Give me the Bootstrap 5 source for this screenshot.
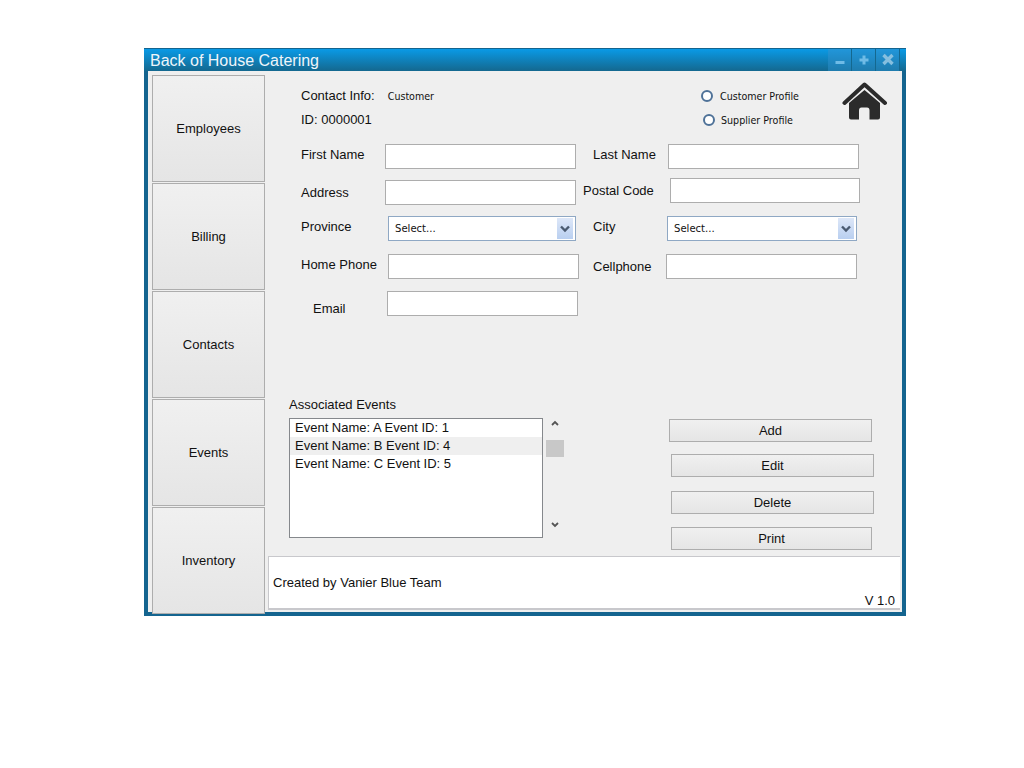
<!DOCTYPE html>
<html lang="en">
<head>
    <meta charset="UTF-8">
    <meta name="viewport" content="width=device-width, initial-scale=1.0">
    <link href="https://cdn.jsdelivr.net/npm/bootstrap@5.3.3/dist/css/bootstrap.min.css" rel="stylesheet">
    <title>Back of House Catering</title>
    <style>
        body { background: #fff; font-family: "Liberation Sans", Arial, sans-serif; font-size: 13px; color: #111; }
        .app-window { width: 762px; height: 568px; margin: 48px 0 0 144px; background: #efefef; border: 4px solid #14648f; border-top-width: 1px; }
        .title-bar { height: 22px; margin: 0 -4px; padding-left: 6px; background: linear-gradient(#0a9ae6, #14688f); color: #eef5fa; font-size: 16px; line-height: 24px; }
        .win-btns { margin-right: 6px; }
        .win-btn { width: 24px; height: 22px; border-right: 1px solid #14688f; background: linear-gradient(#2196da, #1f7cae); }
        .side-col { width: 113px; margin-left: 4px; padding-top: 4px; }
        .side-btn { display: block; width: 113px; height: 107px; margin-bottom: 1px; padding: 0; border: 1px solid #adadad; border-radius: 0; background: linear-gradient(#f0f0f0, #e5e5e5); color: #111; font-size: 13px; }
        .main-col { width: 633px; margin-left: 3px; }
        .form-area { height: 485px; padding-top: 12px; }

        .top-block { height: 50px; }
        .top-info { width: 433px; padding: 1px 0 0 33px; }
        .top-radios { width: 141px; padding-top: 2px; }
        .top-row { height: 24px; }
        .tiny-txt { font-family: "DejaVu Sans Condensed", "DejaVu Sans", sans-serif; font-size: 10.6px; }
        .customer-val { margin: 2px 0 0 13px; }
        .radio-shift { padding-left: 2px; }
        .app-window .profile-radio { width: 12px; height: 12px; margin: -2px 7px 0 0; border: 2px solid #4f7298; background-color: #fff; background-image: none; }
        .app-window .radio-shift .profile-radio { margin-right: 6px; }
        .home-icon { width: 46px; height: 40px; display: block; margin-top: -1px; }

        .field-row { display: flex; align-items: flex-start; padding-left: 33px; }
        .row-first { margin-top: 11px; height: 25px; }
        .row-second { margin-top: 9px; height: 27px; }
        .row-province { margin-top: 11px; height: 25px; }
        .row-phone { margin-top: 13px; height: 25px; }
        .row-email { margin-top: 12px; height: 25px; padding-left: 45px; }
        .fld-group { display: flex; align-items: center; }
        .lbl-84 { width: 84px; }
        .lbl-87 { width: 87px; }
        .lbl-74 { width: 74px; }
        .lbl-75 { width: 75px; }
        .lbl-73 { width: 73px; }
        .lbl-up { position: relative; top: -2px; }
        .lbl-far-down { position: relative; top: 5px; }
        .gap-17 { margin-left: 17px; }
        .gap-7 { margin-left: 7px; }
        .gap-14 { margin-left: 14px; }
        .nudge-2 { margin-top: 2px; }
        .app-window .txt-field { width: 191px; height: 25px; min-height: 0; padding: 0 4px; border: 1px solid #adadad; border-radius: 0; background: #fff; font-size: 13px; }
        .app-window .txt-narrow { width: 190px; }
        .app-window .pick-field { width: 188px; height: 25px; min-height: 0; padding: 2px 0 0 6px; border: 1px solid #8fa8c4; border-radius: 0; font-family: "DejaVu Sans Condensed", "DejaVu Sans", sans-serif; font-size: 11.2px; color: #111;
            background-color: #fff;
            background-image: url("data:image/svg+xml,%3Csvg xmlns='http://www.w3.org/2000/svg' width='16' height='21'%3E%3Cpath d='M4 8.5l4 4 4-4' fill='none' stroke='%234a5a70' stroke-width='2.4'/%3E%3C/svg%3E"), linear-gradient(#dde7f8, #b9cff0);
            background-repeat: no-repeat; background-size: 16px 21px, 16px 21px; background-position: right 2px center, right 2px center; }
        .app-window .pick-wide { width: 190px; }

        .events-block { margin-top: 80px; padding-left: 21px; }
        .events-label { height: 22px; line-height: 18px; }
        .event-list { width: 254px; height: 120px; border: 1px solid #85888c; border-radius: 0; background: #fff; }
        .app-window .event-row { height: 18px; padding: 0 0 0 5px; border: 0; border-radius: 0; background: transparent; line-height: 17px; color: #111; font-size: 13px; }
        .app-window .event-on { background: #efefef; }
        .scroll-col { position: relative; width: 18px; height: 120px; margin: 22px 0 0 3px; }
        .scroll-thumb { position: absolute; left: 0; top: 22px; width: 18px; height: 17px; background: #c8c8c8; }
        .scroll-arrow { position: absolute; left: 5px; width: 8px; height: 6px; display: block; }
        .arrow-up { top: 2px; }
        .arrow-down { top: 104px; }
        .btn-col { margin-left: 105px; padding-top: 23px; }
        .action-btn { display: block; width: 203px; height: 23px; padding: 0; border: 1px solid #adadad; border-radius: 0; background: linear-gradient(#f0f0f0, #e5e5e5); color: #111; font-size: 13px; }
        .edit-btn { margin: 12px 0 0 2px; }
        .delete-btn { margin: 14px 0 0 2px; }
        .print-btn { margin: 13px 0 0 2px; width: 201px; }

        .foot-bar { height: 54px; margin-right: 1px; background: #fff; border: 1px solid #c8c8cc; border-right: 0; border-bottom-width: 2px; padding: 0 5px 0 4px; }
        .foot-made { padding-top: 16px; }
        .foot-ver { padding-top: 34px; }
    </style>
</head>
<body>
    <div class="app-window">
        <div class="title-bar d-flex justify-content-between">
            <span>Back of House Catering</span>
            <div class="win-btns d-flex">
                <div class="win-btn d-flex align-items-center justify-content-center">
                    <svg width="24" height="22"><path d="M7.5 13.5h9" stroke="#6fbbe6" stroke-width="3"/></svg>
                </div>
                <div class="win-btn d-flex align-items-center justify-content-center">
                    <svg width="24" height="22"><path d="M7.5 11h9M12 6.5v9" stroke="#6fbbe6" stroke-width="3"/></svg>
                </div>
                <div class="win-btn d-flex align-items-center justify-content-center">
                    <svg width="24" height="22"><path d="M7.5 6l9 9M16.5 6l-9 9" stroke="#86bfdf" stroke-width="3.4"/></svg>
                </div>
            </div>
        </div>
        <div class="d-flex">
            <div class="side-col">
                <button class="btn side-btn">Employees</button>
                <button class="btn side-btn">Billing</button>
                <button class="btn side-btn">Contacts</button>
                <button class="btn side-btn">Events</button>
                <button class="btn side-btn">Inventory</button>
            </div>
            <div class="main-col">
                <div class="form-area">
                    <div class="top-block d-flex">
                        <div class="top-info">
                            <div class="top-row d-flex align-items-center">
                                <span>Contact Info:</span>
                                <span class="tiny-txt customer-val">Customer</span>
                            </div>
                            <div class="top-row d-flex align-items-center">
                                <span>ID: 0000001</span>
                            </div>
                        </div>
                        <div class="top-radios">
                            <div class="top-row d-flex align-items-center">
                                <input class="form-check-input profile-radio" type="radio" name="profile">
                                <span class="tiny-txt">Customer Profile</span>
                            </div>
                            <div class="top-row d-flex align-items-center radio-shift">
                                <input class="form-check-input profile-radio" type="radio" name="profile">
                                <span class="tiny-txt">Supplier Profile</span>
                            </div>
                        </div>
                        <svg class="home-icon" viewBox="0 0 46 40">
                            <path d="M2.500 21L22.500 2.500 43 21" fill="none" stroke="#2b2b2b" stroke-width="4" stroke-linejoin="round" stroke-linecap="round"/>
                            <path d="M22.500 8L7 21v14.500Q7 37.500 9 37.500h8V28.500Q17 25.500 19.500 25.500h5.500Q27.500 25.500 27.500 28.500V37.500H36Q38 37.500 38 35.500V21z" fill="#2b2b2b"/>
                        </svg>
                    </div>

                    <div class="field-row row-first">
                        <div class="fld-group">
                            <label class="lbl-84 lbl-up">First Name</label>
                            <input class="form-control txt-field" type="text">
                        </div>
                        <div class="fld-group gap-17">
                            <label class="lbl-75 lbl-up">Last Name</label>
                            <input class="form-control txt-field" type="text">
                        </div>
                    </div>
                    <div class="field-row row-second">
                        <div class="fld-group nudge-2">
                            <label class="lbl-84">Address</label>
                            <input class="form-control txt-field" type="text">
                        </div>
                        <div class="fld-group gap-7">
                            <label class="lbl-87">Postal Code</label>
                            <input class="form-control txt-field txt-narrow" type="text">
                        </div>
                    </div>
                    <div class="field-row row-province">
                        <div class="fld-group">
                            <label class="lbl-87 lbl-up">Province</label>
                            <select class="form-select pick-field"><option>Select...</option></select>
                        </div>
                        <div class="fld-group gap-17">
                            <label class="lbl-74 lbl-up">City</label>
                            <select class="form-select pick-field pick-wide"><option>Select...</option></select>
                        </div>
                    </div>
                    <div class="field-row row-phone">
                        <div class="fld-group">
                            <label class="lbl-87 lbl-up">Home Phone</label>
                            <input class="form-control txt-field" type="text">
                        </div>
                        <div class="fld-group gap-14">
                            <label class="lbl-73">Cellphone</label>
                            <input class="form-control txt-field" type="text">
                        </div>
                    </div>
                    <div class="field-row row-email">
                        <div class="fld-group">
                            <label class="lbl-74 lbl-far-down">Email</label>
                            <input class="form-control txt-field" type="text">
                        </div>
                    </div>

                    <div class="events-block d-flex">
                        <div>
                            <div class="events-label">Associated Events</div>
                            <div class="list-group event-list">
                                <div class="list-group-item event-row">Event Name: A Event ID: 1</div>
                                <div class="list-group-item event-row event-on">Event Name: B Event ID: 4</div>
                                <div class="list-group-item event-row">Event Name: C Event ID: 5</div>
                            </div>
                        </div>
                        <div class="scroll-col">
                            <svg class="scroll-arrow arrow-up" viewBox="0 0 8 6"><path d="M1 5l3-3 3 3" fill="none" stroke="#555" stroke-width="1.8"/></svg>
                            <div class="scroll-thumb"></div>
                            <svg class="scroll-arrow arrow-down" viewBox="0 0 8 6"><path d="M1 1l3 3 3-3" fill="none" stroke="#555" stroke-width="1.8"/></svg>
                        </div>
                        <div class="btn-col">
                            <button class="btn action-btn">Add</button>
                            <button class="btn action-btn edit-btn">Edit</button>
                            <button class="btn action-btn delete-btn">Delete</button>
                            <button class="btn action-btn print-btn">Print</button>
                        </div>
                    </div>
                </div>
                <div class="foot-bar d-flex justify-content-between">
                    <span class="foot-made">Created by Vanier Blue Team</span>
                    <span class="foot-ver">V 1.0</span>
                </div>
            </div>
        </div>
    </div>
</body>
</html>
